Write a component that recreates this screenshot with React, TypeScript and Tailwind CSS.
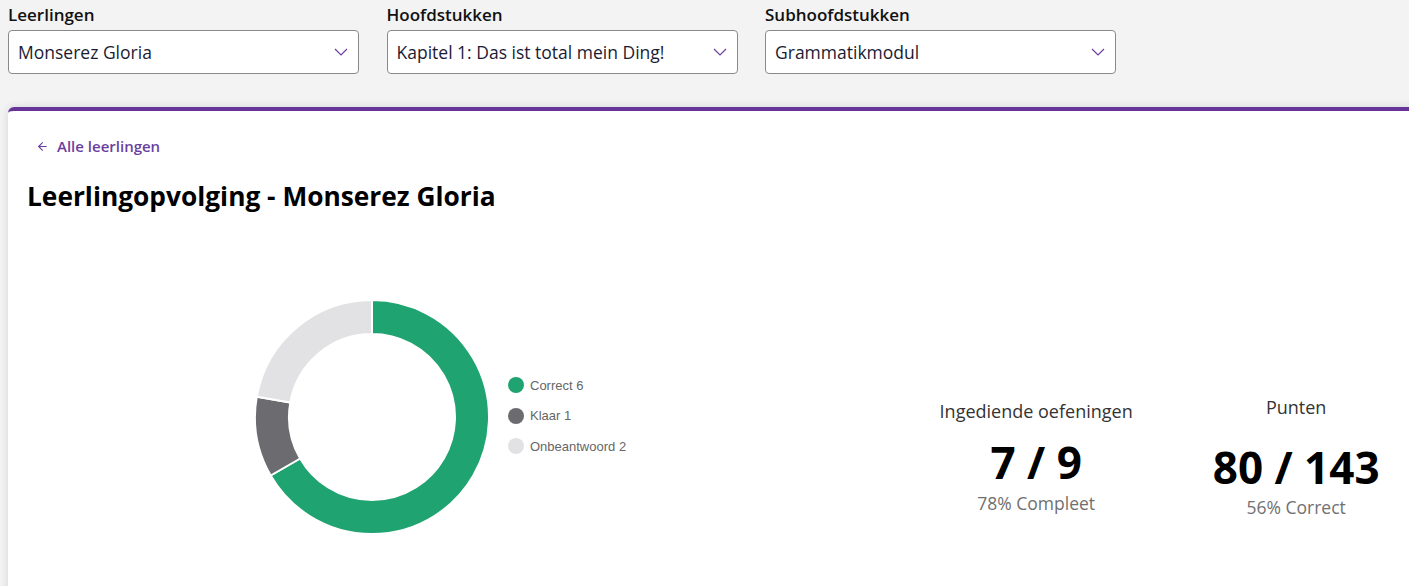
import { ArrowLeft } from "lucide-react";

const font = { fontFamily: '"Open Sans", "Noto Sans", sans-serif' };

const filters = [
  { label: "Leerlingen", value: "Monserez Gloria" },
  { label: "Hoofdstukken", value: "Kapitel 1: Das ist total mein Ding!" },
  { label: "Subhoofdstukken", value: "Grammatikmodul" },
];

const slices = [
  { name: "Correct", count: 6, color: "#1fa371" },
  { name: "Klaar", count: 1, color: "#6b6b70" },
  { name: "Onbeantwoord", count: 2, color: "#e2e2e4" },
];

function arc(cx: number, cy: number, R: number, r: number, a0: number, a1: number) {
  const p = (rad: number, a: number) => {
    const t = (a * Math.PI) / 180;
    return `${cx + rad * Math.sin(t)} ${cy - rad * Math.cos(t)}`;
  };
  const large = a1 - a0 > 180 ? 1 : 0;
  return `M ${p(R, a0)} A ${R} ${R} 0 ${large} 1 ${p(R, a1)} L ${p(r, a1)} A ${r} ${r} 0 ${large} 0 ${p(r, a0)} Z`;
}

function Donut() {
  const total = slices.reduce((s, x) => s + x.count, 0);
  let start = 0;
  return (
    <svg width="238" height="238" viewBox="0 0 238 238">
      {slices.map((s) => {
        const end = start + (s.count / total) * 360;
        const d = arc(119, 119, 117, 83, start, end);
        start = end;
        return <path key={s.name} d={d} fill={s.color} stroke="#fff" strokeWidth="2" />;
      })}
    </svg>
  );
}

function Chevron() {
  return (
    <svg width="14" height="8" viewBox="0 0 14 8" fill="none" stroke="#6b3fa0" strokeWidth="1.2">
      <path d="M1 1l6 6 6-6" />
    </svg>
  );
}

export default function App() {
  return (
    <div className="min-h-[586px] overflow-hidden bg-[#f3f3f3]" style={font}>
      <div className="flex gap-[27.5px] px-2 pt-1">
        {filters.map((f) => (
          <div key={f.label} className="w-[351px]">
            <div className="text-[17px] font-semibold leading-[22px] text-[#111]">{f.label}</div>
            <div className="mt-1 flex h-11 items-center justify-between rounded border border-[#8a8a8a] bg-white pl-[9px] pr-[10px]">
              <span className="text-[17.5px] text-[#1b1b33]">{f.value}</span>
              <Chevron />
            </div>
          </div>
        ))}
      </div>

      <div className="-mr-6 ml-2 mt-[33px] h-[500px] rounded-t-md border-t-4 border-[#663399] bg-white pl-[19px] shadow-[0_0_10px_rgba(0,0,0,0.12)]">
        <div className="ml-[9px] flex items-center gap-2 pt-[25px] text-[15px] font-semibold leading-5 text-[#6b3fa0]">
          <ArrowLeft className="h-[13px] w-[13px]" strokeWidth={2} />
          <span>Alle leerlingen</span>
        </div>
        <h1 className="mt-6 text-[26.3px] font-bold leading-8 text-black">Leerlingopvolging - Monserez Gloria</h1>

        <div className="mt-[55px] flex h-[300px]">
          <div className="ml-[226px] flex items-center">
            <Donut />
            <div className="ml-[17px] flex flex-col gap-[11.5px] pb-[3px]" style={{ fontFamily: '"Liberation Sans", Arial, sans-serif' }}>
              {slices.map((s) => (
                <div key={s.name} className="flex items-center gap-[6px] text-[13px] leading-[19px] text-[#666]">
                  <span className="h-4 w-4 rounded-full" style={{ backgroundColor: s.color }} />
                  <span>
                    {s.name} {s.count}
                  </span>
                </div>
              ))}
            </div>
          </div>
          <div className="ml-[290px] mt-[128px] flex items-start gap-[20px] self-start">
            <div className="mt-1 flex w-[240px] flex-col items-center">
              <div className="text-[18px] leading-6 text-[#333]">Ingediende oefeningen</div>
              <div className="mt-3 text-[44px] font-bold leading-[54px] text-black">7 / 9</div>
              <div className="mt-[2px] text-[17.5px] leading-6 text-[#707070]">78% Compleet</div>
            </div>
            <div className="flex w-[240px] flex-col items-center">
              <div className="text-[18px] leading-6 text-[#333]">Punten</div>
              <div className="mt-[21px] text-[44px] font-bold leading-[54px] text-black">80 / 143</div>
              <div className="mt-px text-[17.5px] leading-6 text-[#707070]">56% Correct</div>
            </div>
          </div>
        </div>
      </div>
    </div>
  );
}
